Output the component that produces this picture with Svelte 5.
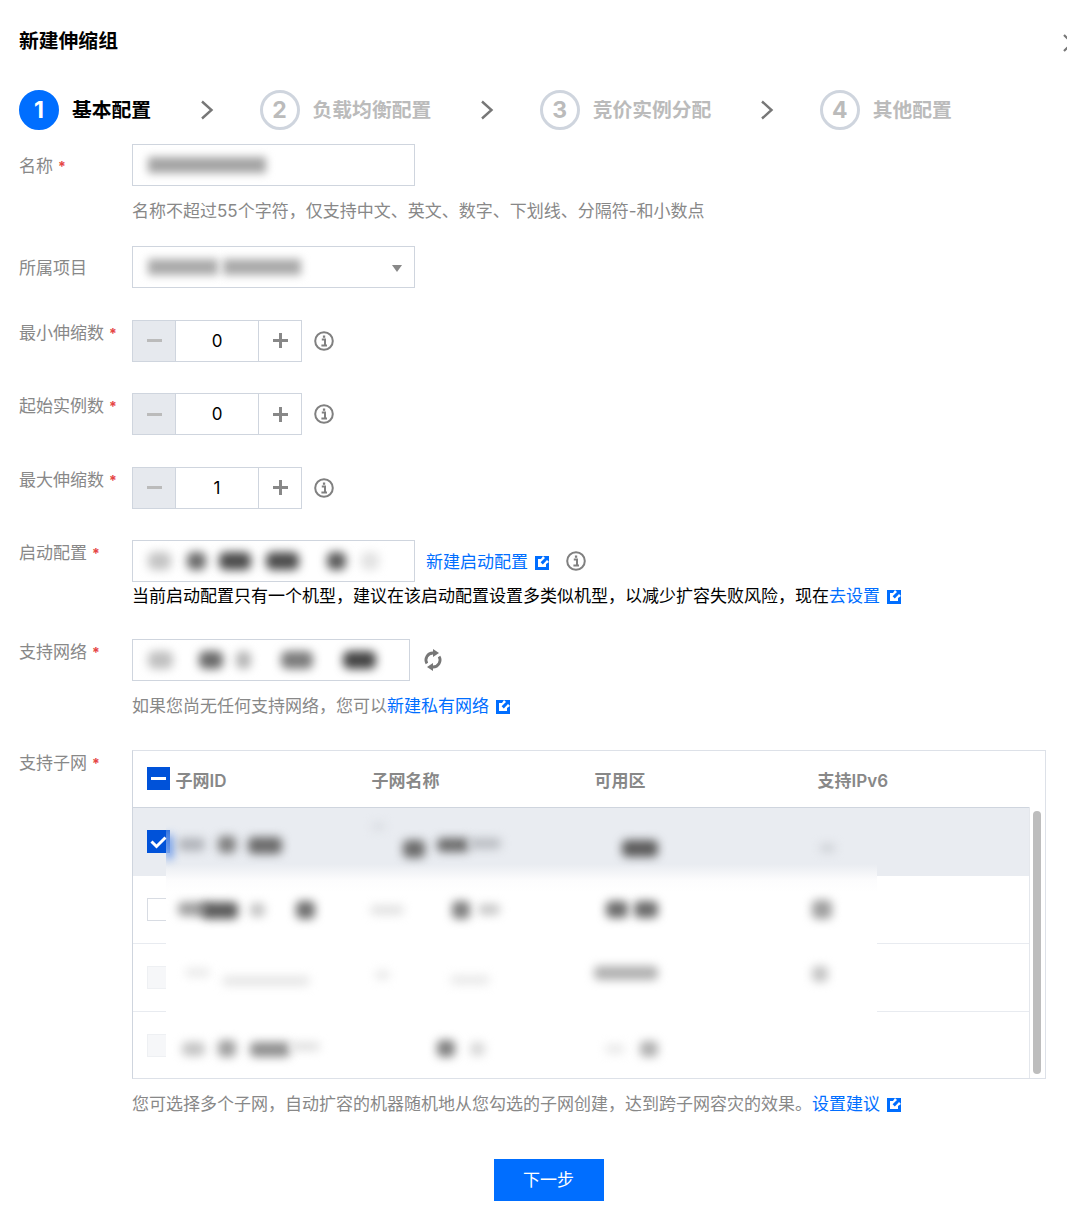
<script>
	const steps = [
		{ n: 1, label: '基本配置', active: true },
		{ n: 2, label: '负载均衡配置' },
		{ n: 3, label: '竞价实例分配' },
		{ n: 4, label: '其他配置' }
	];

	const counters = [
		{ label: '最小伸缩数', value: 0 },
		{ label: '起始实例数', value: 0 },
		{ label: '最大伸缩数', value: 1 }
	];

	const columns = ['子网ID', '子网名称', '可用区', '支持IPv6'];
	const rows = ['selected', 'normal', 'disabled', 'disabled'];

	// masked values: [left, width, color]
	const launchMask = [
		[15, 23, '#c4c4c4'],
		[54, 19, '#6a6a6a'],
		[86, 32, '#4c4c4c'],
		[133, 33, '#4c4c4c'],
		[194, 19, '#5a5a5a'],
		[228, 18, '#e2e2e2']
	];
	const networkMask = [
		[15, 25, '#c0c0c0'],
		[66, 24, '#6a6a6a'],
		[103, 15, '#b4b4b4'],
		[148, 32, '#7c7c7c'],
		[210, 33, '#444']
	];

	// masked table cells, relative to the overlay: [left, top, width, height, color]
	const tableMask = [
		[0, 27, 6, 24, '#2f72e6'],
		[12, 30, 27, 13, '#b0b3b9'],
		[52, 28, 18, 17, '#808080'],
		[82, 29, 34, 17, '#6c6c6c'],
		[206, 15, 13, 7, '#d8dbe0'],
		[237, 32, 22, 18, '#6c6c6c'],
		[271, 30, 32, 14, '#6c6c6c'],
		[303, 30, 32, 11, '#babdc2'],
		[456, 32, 36, 17, '#5c5c5c'],
		[654, 36, 15, 8, '#cdd0d5'],

		[12, 94, 30, 14, '#a0a0a0'],
		[36, 94, 36, 17, '#5c5c5c'],
		[84, 95, 15, 14, '#c4c4c4'],
		[130, 93, 19, 18, '#707070'],
		[204, 97, 34, 10, '#e2e2e2'],
		[286, 93, 18, 18, '#808080'],
		[312, 96, 22, 11, '#c8c8c8'],
		[440, 93, 22, 17, '#6c6c6c'],
		[468, 93, 24, 17, '#6c6c6c'],
		[646, 92, 20, 19, '#a0a0a0'],

		[19, 160, 25, 9, '#eaeaea'],
		[56, 168, 88, 10, '#e6e6e6'],
		[209, 162, 15, 10, '#eaeaea'],
		[284, 167, 40, 10, '#eaeaea'],
		[428, 158, 64, 14, '#b0b0b0'],
		[646, 158, 16, 16, '#c4c4c4'],

		[16, 234, 23, 14, '#c4c4c4'],
		[52, 232, 18, 17, '#a0a0a0'],
		[84, 234, 40, 15, '#909090'],
		[124, 234, 30, 9, '#e0e0e0'],
		[271, 232, 18, 17, '#808080'],
		[304, 234, 15, 14, '#d8d8d8'],
		[439, 236, 20, 10, '#eaeaea'],
		[474, 233, 18, 16, '#b0b0b0']
	];
</script>

{#snippet externalIcon()}
	<svg class="ext" viewBox="0 0 14 14" width="14" height="14" aria-hidden="true">
		<path d="M0 0h8L6 3H3v8h8V8l3-2v8H0z" fill="#006eff" />
		<path d="M8 0h6v6l-2-2-4.2 4.4-2.2-2.2L10 2z" fill="#006eff" />
	</svg>
{/snippet}

{#snippet infoIcon()}
	<svg class="info" viewBox="0 0 20 20" width="20" height="20" aria-hidden="true">
		<circle cx="10" cy="10" r="8.8" fill="none" stroke="#808080" stroke-width="2" />
		<path d="M7.8 8.6h3.2v5.6M7.4 14.6h5.6" fill="none" stroke="#808080" stroke-width="2" />
		<rect x="8.9" y="4.5" width="2.3" height="2.3" fill="#808080" />
	</svg>
{/snippet}

{#snippet chevron()}
	<svg class="chevron" viewBox="0 0 14 20" width="14" height="20" aria-hidden="true">
		<path d="M2 1.5 11.5 10 2 18.5" fill="none" stroke="#777" stroke-width="2.4" />
	</svg>
{/snippet}

{#snippet label(text, star, tall)}
	<div class="label" class:tall>
		{text}{#if star}<span class="star">*</span>{/if}
	</div>
{/snippet}

<div class="page">
	<header class="title-bar">
		<h1>新建伸缩组</h1>
		<svg class="close" viewBox="0 0 18 18" width="18" height="18" aria-hidden="true">
			<path d="M1 1l16 16M17 1 1 17" fill="none" stroke="#777" stroke-width="2.2" />
		</svg>
	</header>

	<nav class="steps">
		{#each steps as step, i}
			<div class="step" class:active={step.active}>
				<span class="circle">{step.n}</span>
				<span class="step-label">{step.label}</span>
			</div>
			{#if i < steps.length - 1}
				{@render chevron()}
			{/if}
		{/each}
	</nav>

	<div class="row first">
		{@render label('名称', true, true)}
		<div class="field">
			<div class="box">
				<div class="mask-bar name-mask"></div>
			</div>
			<p class="hint">名称不超过55个字符，仅支持中文、英文、数字、下划线、分隔符-和小数点</p>
		</div>
	</div>

	<div class="row project">
		{@render label('所属项目', false, true)}
		<div class="field">
			<div class="box select">
				<div class="mask-bar project-mask"></div>
				<div class="mask-bar project-mask second"></div>
				<span class="caret"></span>
			</div>
		</div>
	</div>

	{#each counters as counter}
		<div class="row counter">
			{@render label(counter.label, true)}
			<div class="field inline">
				<div class="stepper">
					<span class="btn off"><i class="minus"></i></span>
					<span class="num">{counter.value}</span>
					<span class="btn"><i class="plus"></i></span>
				</div>
				{@render infoIcon()}
			</div>
		</div>
	{/each}

	<div class="row launch">
		{@render label('启动配置', true)}
		<div class="field">
			<div class="inline">
				<div class="box masked">
					{#each launchMask as [left, width, color]}
						<i class="blob" style="left:{left}px;width:{width}px;background:{color}"></i>
					{/each}
				</div>
				<a class="link new-launch" href="#launch">新建启动配置{@render externalIcon()}</a>
				{@render infoIcon()}
			</div>
			<p class="hint dark">当前启动配置只有一个机型，建议在该启动配置设置多类似机型，以减少扩容失败风险，现在<a class="link" href="#set">去设置{@render externalIcon()}</a></p>
		</div>
	</div>

	<div class="row network">
		{@render label('支持网络', true)}
		<div class="field">
			<div class="inline">
				<div class="box masked short">
					{#each networkMask as [left, width, color]}
						<i class="blob" style="left:{left}px;width:{width}px;background:{color}"></i>
					{/each}
				</div>
				<svg class="refresh" viewBox="0 0 20 22" width="20" height="22" aria-hidden="true">
					<path d="M10 4A7 7 0 0 0 3.9 14.5M10 18A7 7 0 0 0 16.1 7.5" fill="none" stroke="#777" stroke-width="2.8" />
					<path d="M10 0v8l6-4zM10 22v-8l-6 4z" fill="#777" />
				</svg>
			</div>
			<p class="hint">如果您尚无任何支持网络，您可以<a class="link" href="#vpc">新建私有网络{@render externalIcon()}</a></p>
		</div>
	</div>

	<div class="row subnet">
		{@render label('支持子网', true)}
		<div class="field">
			<div class="table">
				<div class="thead">
					{#each columns as col, i}
						<div class="th">
							{#if i === 0}
								<span class="check on"><i class="dash"></i></span>
							{/if}
							{col}
						</div>
					{/each}
				</div>
				<div class="tbody">
					<div class="trows">
						{#each rows as state}
							<div class="tr {state}">
								<span class="check {state}">
									{#if state === 'selected'}
										<svg viewBox="0 0 23 23" width="23" height="23" aria-hidden="true">
											<path d="M4.5 11.5l5 5 9-9" fill="none" stroke="#fff" stroke-width="3" />
										</svg>
									{/if}
								</span>
							</div>
						{/each}
						<div class="mask">
							{#each tableMask as [left, top, width, height, color]}
								<i class="cell" style="left:{left}px;top:{top}px;width:{width}px;height:{height}px;background:{color}"></i>
							{/each}
						</div>
					</div>
					<div class="scroll"><span class="thumb"></span></div>
				</div>
			</div>
			<p class="hint">您可选择多个子网，自动扩容的机器随机地从您勾选的子网创建，达到跨子网容灾的效果。<a class="link" href="#advice">设置建议{@render externalIcon()}</a></p>
		</div>
	</div>

	<footer class="footer">
		<button type="button" class="next">下一步</button>
	</footer>
</div>

<style>
	:global(body) {
		margin: 0;
		background: #fff;
	}

	.page {
		box-sizing: border-box;
		width: 1067px;
		height: 1217px;
		padding: 29px 21px 16px 19px;
		overflow: hidden;
		font-family: Inter, 'Noto Sans CJK SC', sans-serif;
		font-size: 17px;
		line-height: 24px;
		color: #888;
	}

	.title-bar {
		display: flex;
		align-items: center;
		justify-content: space-between;
		height: 24px;
	}

	h1 {
		margin: 0;
		font-size: 19.8px;
		font-weight: 700;
		color: #000;
	}

	.close {
		margin-right: -35px;
		margin-top: 4px;
	}

	.steps {
		display: flex;
		align-items: center;
		height: 40px;
		margin-top: 37px;
	}

	.step {
		display: flex;
		align-items: center;
		gap: 13px;
		font-size: 19.8px;
		font-weight: 700;
		color: #bbb;
	}

	.step.active {
		color: #000;
	}

	.circle {
		box-sizing: border-box;
		display: flex;
		align-items: center;
		justify-content: center;
		width: 40px;
		height: 40px;
		border: 3px solid #cfd5de;
		border-radius: 50%;
		font-size: 23px;
	}

	.active .circle {
		border-color: #006eff;
		background: #006eff;
		color: #fff;
	}

	.chevron {
		margin: 0 46px 0 48.4px;
	}

	.row {
		display: grid;
		grid-template-columns: 113px 1fr;
		margin-top: 31.5px;
	}

	.row.first {
		margin-top: 14px;
	}

	.row.project {
		margin-top: 23px;
	}

	.row.counter {
		height: 42px;
	}

	.row.launch,
	.row.network {
		margin-top: 31px;
	}

	.row.subnet {
		margin-top: 32px;
	}

	.label {
		padding-top: 1px;
		white-space: nowrap;
	}

	.label.tall {
		padding-top: 10px;
	}

	.star {
		margin-left: 5px;
		font-size: 14px;
		font-weight: 700;
		color: #e54545;
	}

	.field {
		min-width: 0;
	}

	.inline {
		display: flex;
		align-items: center;
	}

	.box {
		box-sizing: border-box;
		position: relative;
		width: 283px;
		height: 42px;
		border: 1px solid #cfd5de;
		overflow: hidden;
		flex: none;
	}

	.box.short {
		width: 278px;
	}

	.mask-bar {
		position: absolute;
		top: 12px;
		height: 16px;
		background: #a4a4a4;
		filter: blur(4.5px);
	}

	.name-mask {
		left: 15px;
		width: 118px;
	}

	.project-mask {
		left: 15px;
		width: 70px;
		background: #aaa;
	}

	.project-mask.second {
		left: 90px;
		width: 78px;
	}

	.caret {
		position: absolute;
		top: 18px;
		right: 12px;
		border-style: solid;
		border-width: 7px 5.5px 0;
		border-color: #888 transparent transparent;
	}

	.blob {
		position: absolute;
		top: 11px;
		height: 18px;
		border-radius: 6px;
		filter: blur(5px);
	}

	.hint {
		margin: 13px 0 0;
		white-space: nowrap;
	}

	.hint.dark {
		margin-top: 2px;
		color: #000;
	}

	.link {
		color: #006eff;
		text-decoration: none;
	}

	.new-launch {
		margin-left: 11px;
		padding-top: 3px;
	}

	.ext {
		margin-left: 7px;
		vertical-align: -2px;
	}

	.info {
		margin-left: 12px;
		flex: none;
	}

	.new-launch + .info {
		margin-left: 17px;
	}

	.refresh {
		margin-left: 13px;
	}

	.stepper {
		box-sizing: border-box;
		display: flex;
		width: 170px;
		height: 42px;
		border: 1px solid #cfd5de;
	}

	.btn {
		display: flex;
		align-items: center;
		justify-content: center;
		flex: none;
		width: 42px;
	}

	.btn.off {
		background: #e6e9ee;
		border-right: 1px solid #cfd5de;
		box-sizing: border-box;
		width: 43px;
	}

	.num {
		flex: 1;
		text-align: center;
		line-height: 41px;
		color: #000;
	}

	.btn:last-child {
		border-left: 1px solid #cfd5de;
	}

	.minus,
	.plus {
		position: relative;
		display: block;
		width: 15px;
		height: 3px;
		background: #bbb;
	}

	.plus {
		background: #888;
	}

	.plus::after {
		content: '';
		position: absolute;
		left: 6px;
		top: -6px;
		width: 3px;
		height: 15px;
		background: #888;
	}

	.table {
		box-sizing: border-box;
		width: 914px;
		height: 329px;
		border: 1.5px solid #dde1e8;
		border-left-color: #cfd5de;
		display: flex;
		flex-direction: column;
	}

	.thead {
		box-sizing: border-box;
		display: grid;
		grid-template-columns: 225px 223px 223px 1fr;
		align-items: center;
		height: 56px;
		padding-left: 13.5px;
		padding-top: 5px;
		font-weight: 600;
		color: #888;
		flex: none;
	}

	.th {
		display: flex;
		align-items: center;
		gap: 6px;
	}

	.check {
		box-sizing: border-box;
		display: flex;
		align-items: center;
		justify-content: center;
		flex: none;
		width: 23px;
		height: 23px;
	}

	.thead .check {
		margin-top: -5px;
	}

	.check.on,
	.check.selected {
		background: #0052d9;
	}

	.dash {
		width: 15px;
		height: 3px;
		background: #fff;
	}

	.check.normal {
		background: #fff;
		border: 1px solid #d8dce3;
	}

	.check.disabled {
		background: #f6f7f9;
		border: 1px solid #eef0f3;
	}

	.tbody {
		display: flex;
		flex: 1;
		min-height: 0;
	}

	.trows {
		position: relative;
		flex: 1;
		overflow: hidden;
		border-top: 1.5px solid #cfd5de;
	}

	.tr {
		box-sizing: border-box;
		display: flex;
		align-items: center;
		height: 68px;
		padding-left: 13.5px;
		border-bottom: 1.5px solid #e8ebf0;
	}

	.tr.selected {
		background: #e9ecf1;
		border-bottom: none;
	}

	.tr:nth-child(4) {
		border-bottom: none;
	}

	.mask {
		position: absolute;
		left: 32.5px;
		top: 0;
		width: 711px;
		height: 100%;
		overflow: hidden;
		background: linear-gradient(to bottom, transparent 12px, #e9ecf1 56px, #fcfcfd 72px, #fff 84px);
	}

	.cell {
		position: absolute;
		border-radius: 5px;
		filter: blur(5px);
	}

	.scroll {
		flex: none;
		width: 16px;
		padding: 4px 4px 4px 3px;
		box-sizing: border-box;
		border-left: 1px solid #e4e7ec;
	}

	.thumb {
		display: block;
		height: 100%;
		border-radius: 5px;
		background: #bdbdbd;
	}

	.footer {
		display: flex;
		justify-content: center;
		margin-top: 43px;
		padding-left: 32px;
	}

	.next {
		width: 110px;
		height: 42px;
		border: none;
		background: #006eff;
		color: #fff;
		font: inherit;
	}
</style>
